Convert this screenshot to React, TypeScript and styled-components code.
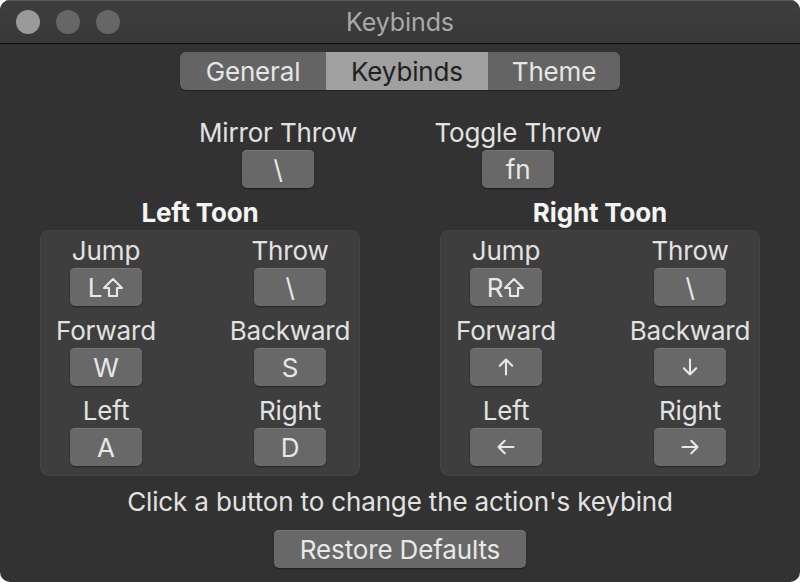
import React from "react";
import styled, { createGlobalStyle } from "styled-components";

const Global = createGlobalStyle`
  html, body { margin: 0; padding: 0; background: #ffffff; }
  body { font-family: Inter, "Noto Sans", sans-serif; -webkit-font-smoothing: antialiased; }
`;

const Window = styled.div`
  width: 800px;
  height: 582px;
  border-radius: 10px;
  overflow: hidden;
  display: flex;
  flex-direction: column;
  background: #323232;
`;

const TitleBar = styled.div`
  height: 43px;
  flex: none;
  display: flex;
  align-items: center;
  position: relative;
  background: linear-gradient(#3e3e3e, #383838);
  box-shadow: inset 0 1px 0 #5a5a5a;
  border-bottom: 1px solid #0e0e0e;
  padding-left: 16px;
`;

const Lights = styled.div`
  display: flex;
  gap: 16px;
`;

const Light = styled.div<{ $active?: boolean }>`
  width: 24px;
  height: 24px;
  border-radius: 50%;
  background: ${(p) => (p.$active ? "#9a9a9a" : "#666666")};
`;

const Title = styled.div`
  position: absolute;
  left: 0;
  right: 0;
  top: 0;
  bottom: 0;
  display: flex;
  align-items: center;
  justify-content: center;
  color: #a9a9a9;
  font-size: 25px;
  letter-spacing: -0.1px;
  pointer-events: none;
`;

const Body = styled.div`
  flex: 1;
  display: flex;
  flex-direction: column;
  align-items: center;
  padding-top: 8px;
  color: #e2e2e2;
  font-size: 26px;
  letter-spacing: -0.15px;
`;

const Segmented = styled.div`
  display: flex;
  width: 440px;
  height: 38px;
  border-radius: 6px;
  overflow: hidden;
  background: #646464;
  box-shadow: 0 1px 1px rgba(0, 0, 0, 0.35);
`;

const Segment = styled.div<{ $w: number; $selected?: boolean }>`
  width: ${(p) => p.$w}px;
  display: flex;
  align-items: center;
  justify-content: center;
  color: ${(p) => (p.$selected ? "#1f1f1f" : "#e6e6e6")};
  background: ${(p) => (p.$selected ? "#a0a0a0" : "transparent")};
`;

const GlobalRow = styled.div`
  display: grid;
  grid-template-columns: 200px 200px;
  column-gap: 40px;
  margin-top: 29px;
  margin-right: 4px;
`;

const Cell = styled.div`
  display: flex;
  flex-direction: column;
  align-items: center;
`;

const Label = styled.div`
  line-height: 28px;
  height: 28px;
  white-space: nowrap;
  color: #e2e2e2;
  margin-bottom: 3px;
`;

const KeyButton = styled.div<{ $w?: number }>`
  width: ${(p) => p.$w ?? 72}px;
  height: 38px;
  box-sizing: border-box;
  border-radius: 5px;
  background: #686868;
  box-shadow: inset 0 1px 0 #777777, 0 1px 1.5px rgba(0, 0, 0, 0.45);
  display: flex;
  align-items: center;
  justify-content: center;
  color: #e8e8e8;
`;

const Toons = styled.div`
  display: grid;
  grid-template-columns: 320px 320px;
  column-gap: 80px;
  margin-top: 11px;
`;

const ToonTitle = styled.div`
  font-weight: 700;
  line-height: 28px;
  text-align: center;
  color: #f4f4f4;
  margin-bottom: 3px;
`;

const Panel = styled.div`
  background: #3e3e3e;
  border-radius: 9px;
  box-shadow: inset 0 0 0 1px #444444;
  padding: 7px 4px 10px 0;
  display: grid;
  grid-template-columns: 132px 132px;
  justify-content: space-between;
  row-gap: 11px;
`;

const Hint = styled.div`
  margin-top: 12px;
  line-height: 28px;
  color: #e2e2e2;
`;

const Restore = styled(KeyButton)`
  margin-top: 14px;
`;

const Glyph = styled.span`
  display: inline-flex;
  align-items: center;
  & > svg { flex: none; }
`;

const ShiftIcon = () => (
  <svg width="22" height="21" viewBox="0 0 22 21" fill="none">
    <path
      d="M11 2 L20 11 H15 V19 H7 V11 H2 Z"
      stroke="#e8e8e8"
      strokeWidth="2.1"
      strokeLinejoin="round"
    />
  </svg>
);

type Dir = "up" | "down" | "left" | "right";
const rot: Record<Dir, number> = { up: 0, right: 90, down: 180, left: 270 };

const Arrow = ({ dir }: { dir: Dir }) => (
  <svg width="20" height="20" viewBox="0 0 20 20" fill="none">
    <g transform={`rotate(${rot[dir]} 10 10)`}>
      <path
        d="M10 2.5 V17.5 M3.8 8.7 L10 2.5 L16.2 8.7"
        stroke="#e8e8e8"
        strokeWidth="2.1"
        strokeLinecap="round"
        strokeLinejoin="round"
      />
    </g>
  </svg>
);

type Bind = { label: string; key: React.ReactNode };

const leftBinds: Bind[] = [
  { label: "Jump", key: <Glyph>L<ShiftIcon /></Glyph> },
  { label: "Throw", key: "\\" },
  { label: "Forward", key: "W" },
  { label: "Backward", key: "S" },
  { label: "Left", key: "A" },
  { label: "Right", key: "D" },
];

const rightBinds: Bind[] = [
  { label: "Jump", key: <Glyph>R<ShiftIcon /></Glyph> },
  { label: "Throw", key: "\\" },
  { label: "Forward", key: <Glyph><Arrow dir="up" /></Glyph> },
  { label: "Backward", key: <Glyph><Arrow dir="down" /></Glyph> },
  { label: "Left", key: <Glyph><Arrow dir="left" /></Glyph> },
  { label: "Right", key: <Glyph><Arrow dir="right" /></Glyph> },
];

const Toon = ({ title, binds }: { title: string; binds: Bind[] }) => (
  <div>
    <ToonTitle>{title}</ToonTitle>
    <Panel>
      {binds.map((b) => (
        <Cell key={b.label}>
          <Label>{b.label}</Label>
          <KeyButton>{b.key}</KeyButton>
        </Cell>
      ))}
    </Panel>
  </div>
);

export default function App() {
  return (
    <>
      <Global />
      <Window>
        <TitleBar>
          <Lights>
            <Light $active />
            <Light />
            <Light />
          </Lights>
          <Title>Keybinds</Title>
        </TitleBar>
        <Body>
          <Segmented>
            <Segment $w={146}>General</Segment>
            <Segment $w={162} $selected>
              Keybinds
            </Segment>
            <Segment $w={132}>Theme</Segment>
          </Segmented>
          <GlobalRow>
            <Cell>
              <Label>Mirror Throw</Label>
              <KeyButton>\</KeyButton>
            </Cell>
            <Cell>
              <Label>Toggle Throw</Label>
              <KeyButton>fn</KeyButton>
            </Cell>
          </GlobalRow>
          <Toons>
            <Toon title="Left Toon" binds={leftBinds} />
            <Toon title="Right Toon" binds={rightBinds} />
          </Toons>
          <Hint>Click a button to change the action's keybind</Hint>
          <Restore $w={252}>Restore Defaults</Restore>
        </Body>
      </Window>
    </>
  );
}
